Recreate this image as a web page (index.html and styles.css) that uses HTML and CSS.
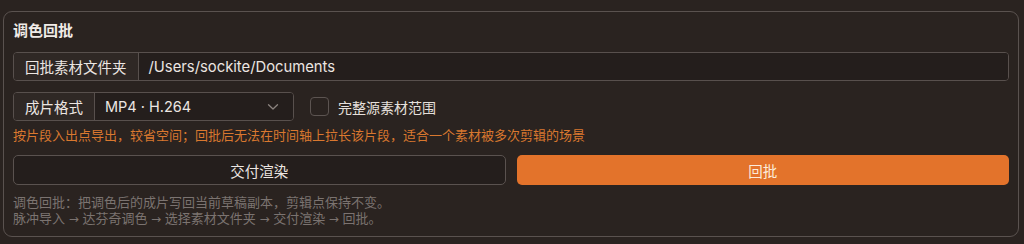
FILE: index.html
```html
<!DOCTYPE html>
<html lang="zh">
<head>
<meta charset="utf-8">
<link rel="stylesheet" href="styles.css">
</head>
<body>
<section class="panel">
  <h2 class="title">调色回批</h2>
  <div class="group row1">
    <span class="addon">回批素材文件夹</span>
    <span class="field path">/Users/sockite/Documents</span>
  </div>
  <div class="row2">
    <div class="group select-group">
      <span class="addon">成片格式</span>
      <span class="field select">
        <span>MP4 · H.264</span>
        <svg class="chev" width="12" height="8" viewBox="0 0 12 8"><path d="M1.5 1.8 L6 6 L10.5 1.8" fill="none" stroke="#8a827e" stroke-width="1.3" stroke-linecap="round" stroke-linejoin="round"/></svg>
      </span>
    </div>
    <label class="check"><span class="box"></span><span>完整源素材范围</span></label>
  </div>
  <p class="hint">按片段入出点导出，较省空间；回批后无法在时间轴上拉长该片段，适合一个素材被多次剪辑的场景</p>
  <div class="buttons">
    <button class="btn secondary">交付渲染</button>
    <button class="btn primary">回批</button>
  </div>
  <p class="foot">调色回批：把调色后的成片写回当前草稿副本，剪辑点保持不变。<br>脉冲导入 <span class="arr">→</span> 达芬奇调色 <span class="arr">→</span> 选择素材文件夹 <span class="arr">→</span> 交付渲染 <span class="arr">→</span> 回批。</p>
</section>
</body>
</html>
```

FILE: styles.css
```css
html, body {
  margin: 0;
  padding: 0;
  background: #2a2320;
  width: 1024px;
  height: 244px;
  overflow: hidden;
}
body {
  font-family: Inter, "Noto Sans CJK SC", sans-serif;
  color: #ebe5e1;
}
.panel {
  box-sizing: border-box;
  margin: 11px 0 0 3px;
  width: 1016px;
  height: 226px;
  border: 1px solid #5a524f;
  border-radius: 9px;
  padding: 9px 9px 0 9px;
}
.title {
  margin: 0;
  font-size: 15px;
  font-weight: 700;
  line-height: 20px;
  color: #f0ebe7;
}
.group {
  display: flex;
  box-sizing: border-box;
  height: 29px;
  border: 1px solid #58504d;
  border-radius: 4px;
  overflow: hidden;
  font-size: 14.5px;
}
.row1 {
  margin-top: 11px;
}
.addon {
  display: flex;
  align-items: center;
  padding: 0 11px 0 11px;
  background: #2f2825;
  border-right: 1px solid #58504d;
  color: #ece6e2;
}
.field {
  flex: 1;
  display: flex;
  align-items: center;
  padding: 0 11px 0 10px;
  background: #241e1c;
  color: #ece6e2;
}
.path {
  font-size: 14.8px;
}
.row2 {
  display: flex;
  align-items: center;
  margin-top: 11px;
}
.select-group {
  width: 281px;
}
.select {
  justify-content: space-between;
  padding-right: 14px;
}
.chev {
  display: block;
}
.check {
  display: flex;
  align-items: center;
  margin-left: 16px;
  font-size: 14px;
  color: #e6e0dc;
}
.box {
  box-sizing: border-box;
  width: 19px;
  height: 19px;
  border: 1px solid #5c5451;
  border-radius: 4px;
  margin-right: 9px;
}
.hint {
  margin: 5px 0 0 0;
  font-size: 13px;
  line-height: 18px;
  color: #d9782f;
}
.buttons {
  display: grid;
  grid-template-columns: 1fr 1fr;
  gap: 11px;
  margin-top: 11px;
}
.btn {
  height: 30px;
  border-radius: 5px;
  font-family: inherit;
  font-size: 14.5px;
  padding: 0;
}
.secondary {
  background: #241e1c;
  border: 1px solid #5a524f;
  color: #ece6e2;
}
.primary {
  background: #e3732b;
  border: none;
  color: #fcebd9;
}
.foot {
  margin: 9px 0 0 0;
  font-size: 13px;
  line-height: 16px;
  color: #7b7370;
}
.arr {
  font-family: "DejaVu Sans", sans-serif;
  font-size: 12px;
}
```
